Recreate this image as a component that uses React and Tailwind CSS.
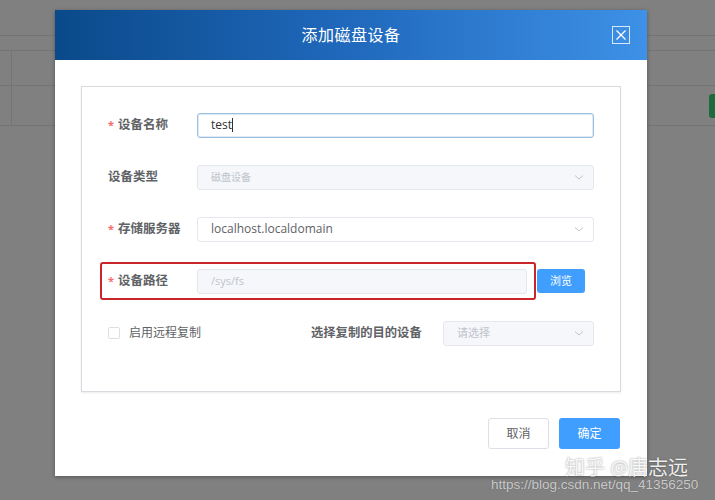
import React from 'react'

const font = "font-['Open_Sans','Noto_Sans_CJK_SC',sans-serif]"

const Chevron = () => (
    <svg width="12" height="12" viewBox="0 0 12 12" fill="none" className="shrink-0">
        <path d="M2 4.5 L6 8 L10 4.5" stroke="#c0c4cc" strokeWidth="1" />
    </svg>
)

const Label = ({ required, children }) => (
    <div className="w-[89px] shrink-0 flex items-center text-[12.5px] font-bold text-[#606266]">
        {required && <span className="text-[#f56c6c] mr-[4px] text-[11px]">*</span>}
        {children}
    </div>
)

const Row = ({ children }) => (
    <div className="relative flex items-center h-[52px]">{children}</div>
)

const App = _ => {
    return (
        <div className={`relative w-[715px] h-[500px] overflow-hidden bg-[#808080] ${font}`}>
            {/* page behind the overlay */}
            <div className="w-full">
                <div className="h-[36px] border-b border-[#747474]" />
                <div className="h-[15px] border-b border-[#747474]" />
                <div className="h-[35px] border-b border-[#747474] flex">
                    <div className="w-[12px] border-r border-[#747474]" />
                </div>
                <div className="h-[40px] border-b border-[#747474] flex justify-between">
                    <div className="w-[12px] border-r border-[#747474]" />
                    <div className="mt-[8px] w-[6px] h-[24px] rounded-l-[3px] bg-[#1d6b3c]" />
                </div>
            </div>

            {/* dialog */}
            <div className="absolute left-[55px] top-[10px] w-[592px] h-[466px] bg-white shadow-[0_1px_4px_rgba(0,0,0,0.35)] flex flex-col">
                <div className="h-[50px] shrink-0 bg-linear-to-r from-[#0a4a8a] via-[#2069bd] to-[#3d91e6] flex items-center justify-center relative">
                    <span className="text-white text-[16px] tracking-[0.5px]">添加磁盘设备</span>
                    <button className="absolute right-[17px] top-[16px] w-[18px] h-[18px] border border-white/80 flex items-center justify-center">
                        <svg width="12" height="12" viewBox="0 0 12 12">
                            <path d="M1.5 1.5 L10.5 10.5 M10.5 1.5 L1.5 10.5" stroke="white" strokeWidth="1.3" />
                        </svg>
                    </button>
                </div>

                <div className="px-[26px] pt-[26px]">
                    <div className="border border-[#d8dbe0] shadow-[0_1px_2px_rgba(0,0,0,0.08)] pl-[26px] pr-[26px] pt-[12px] h-[306px]">
                        <Row>
                            <Label required>设备名称</Label>
                            <div className="flex-1 h-[25px] rounded-[3px] border border-[#9ec0e0] shadow-[inset_0_0_0_1px_rgba(158,192,224,0.35)] px-[13px] flex items-center text-[12px] text-[#303133]">
                                test<span className="w-px h-[14px] bg-[#303133]" />
                            </div>
                        </Row>
                        <Row>
                            <Label>设备类型</Label>
                            <div className="flex-1 h-[25px] rounded-[3px] border border-[#e4e7ed] bg-[#f5f7fa] pl-[13px] pr-[8px] flex items-center justify-between text-[10px] text-[#c0c4cc]">
                                磁盘设备
                                <Chevron />
                            </div>
                        </Row>
                        <Row>
                            <Label required>存储服务器</Label>
                            <div className="flex-1 h-[25px] rounded-[3px] border border-[#e4e7ed] bg-white pl-[13px] pr-[8px] flex items-center justify-between text-[12px] text-[#606266]">
                                localhost.localdomain
                                <Chevron />
                            </div>
                        </Row>
                        <Row>
                            <Label required>设备路径</Label>
                            <div className="w-[330px] h-[25px] rounded-[3px] border border-[#e4e7ed] bg-[#f5f7fa] px-[13px] flex items-center text-[11px] text-[#c0c4cc]">
                                /sys/fs
                            </div>
                            <button className="ml-[10px] w-[48px] h-[24px] rounded-[3px] bg-[#409eff] text-white text-[11px]">
                                浏览
                            </button>
                            <div className="absolute left-[-8px] top-[7px] w-[436px] h-[38px] border-2 border-[#c9262b] rounded-[3px]" />
                        </Row>
                        <Row>
                            <div className="w-[12px] h-[12px] border border-[#dcdfe6] rounded-[2px] bg-white" />
                            <span className="ml-[9px] text-[12px] text-[#606266]">启用远程复制</span>
                            <span className="ml-[110px] w-[132px] text-[12.3px] font-bold text-[#606266]">选择复制的目的设备</span>
                            <div className="flex-1 h-[25px] rounded-[3px] border border-[#e4e7ed] bg-[#f5f7fa] pl-[13px] pr-[8px] flex items-center justify-between text-[11px] text-[#c0c4cc]">
                                请选择
                                <Chevron />
                            </div>
                        </Row>
                    </div>
                </div>

                <div className="flex justify-end gap-[10px] pr-[27px] mt-[26px]">
                    <button className="w-[61px] h-[31px] rounded-[3px] border border-[#dcdfe6] bg-white text-[12px] text-[#606266]">
                        取消
                    </button>
                    <button className="w-[61px] h-[31px] rounded-[3px] bg-[#409eff] text-[12px] text-white">
                        确定
                    </button>
                </div>
            </div>

            {/* watermarks */}
            <div className="absolute left-[565px] top-[458px] text-[20px] text-white/90 leading-none [text-shadow:0_0_2px_rgba(0,0,0,0.45)]">
                知乎 @唐志远
            </div>
            <div className="absolute left-[491px] top-[478px] font-['Liberation_Sans',sans-serif] text-[13.5px] text-white/70 leading-none [text-shadow:0_0_1px_rgba(0,0,0,0.4)]">
                https://blog.csdn.net/qq_41356250
            </div>
        </div>
    )
}

export default App
